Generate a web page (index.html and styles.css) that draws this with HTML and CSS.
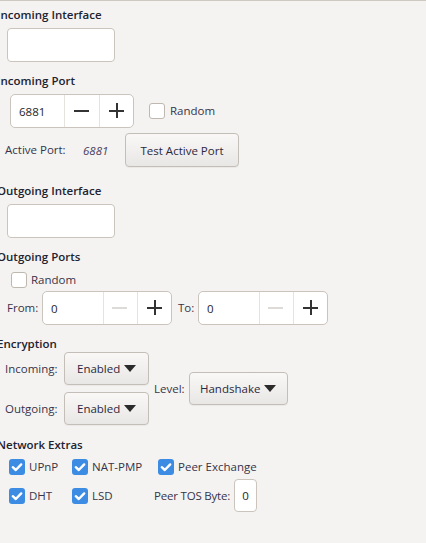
FILE: index.html
```html
<!DOCTYPE html>
<html lang="en">
<head>
<meta charset="utf-8">
<title>Connection</title>
<link rel="stylesheet" href="styles.css">
</head>
<body>
<div class="pane">

  <section class="group g-in-iface">
    <h2 class="title">Incoming Interface</h2>
    <div class="textbox iface"></div>
  </section>

  <section class="group g-in-port">
    <h2 class="title">Incoming Port</h2>
    <div class="row port-row">
      <div class="spinner sp-in">
        <span class="sp-value">6881</span>
        <span class="sp-btn"><i class="minus"></i></span>
        <span class="sp-btn"><i class="plus"></i></span>
      </div>
      <label class="check check-random"><span class="box"></span><span class="lbl">Random</span></label>
    </div>
    <div class="row active-row">
      <span class="lbl active-lbl">Active Port:</span>
      <span class="active-val">6881</span>
      <button class="btn test-btn">Test Active Port</button>
    </div>
  </section>

  <section class="group g-out-iface">
    <h2 class="title">Outgoing Interface</h2>
    <div class="textbox iface"></div>
  </section>

  <section class="group g-out-ports">
    <h2 class="title">Outgoing Ports</h2>
    <label class="check check-out-random"><span class="box"></span><span class="lbl">Random</span></label>
    <div class="row range-row">
      <span class="lbl from-lbl">From:</span>
      <div class="spinner sp-range">
        <span class="sp-value">0</span>
        <span class="sp-btn"><i class="minus off"></i></span>
        <span class="sp-btn"><i class="plus"></i></span>
      </div>
      <span class="lbl to-lbl">To:</span>
      <div class="spinner sp-range">
        <span class="sp-value">0</span>
        <span class="sp-btn"><i class="minus off"></i></span>
        <span class="sp-btn"><i class="plus"></i></span>
      </div>
    </div>
  </section>

  <section class="group g-enc">
    <h2 class="title">Encryption</h2>
    <div class="enc-grid">
      <span class="lbl enc-in-lbl">Incoming:</span>
      <div class="combo enc-in"><span>Enabled</span><i class="arrow"></i></div>
      <span class="lbl enc-out-lbl">Outgoing:</span>
      <div class="combo enc-out"><span>Enabled</span><i class="arrow"></i></div>
      <span class="lbl level-lbl">Level:</span>
      <div class="combo level"><span>Handshake</span><i class="arrow"></i></div>
    </div>
  </section>

  <section class="group g-extras">
    <h2 class="title">Network Extras</h2>
    <div class="extras-grid">
      <label class="check on"><span class="box"><svg viewBox="0 0 16 16"><path d="M3.8 8.2 L6.8 11 L12.2 5.4"/></svg></span><span class="lbl">UPnP</span></label>
      <label class="check on"><span class="box"><svg viewBox="0 0 16 16"><path d="M3.8 8.2 L6.8 11 L12.2 5.4"/></svg></span><span class="lbl">NAT-PMP</span></label>
      <label class="check on pex"><span class="box"><svg viewBox="0 0 16 16"><path d="M3.8 8.2 L6.8 11 L12.2 5.4"/></svg></span><span class="lbl">Peer Exchange</span></label>
      <label class="check on"><span class="box"><svg viewBox="0 0 16 16"><path d="M3.8 8.2 L6.8 11 L12.2 5.4"/></svg></span><span class="lbl">DHT</span></label>
      <label class="check on"><span class="box"><svg viewBox="0 0 16 16"><path d="M3.8 8.2 L6.8 11 L12.2 5.4"/></svg></span><span class="lbl">LSD</span></label>
      <div class="tos">
        <span class="lbl tos-lbl">Peer TOS Byte:</span>
        <span class="textbox tos-box">0</span>
      </div>
    </div>
  </section>

</div>
</body>
</html>
```

FILE: styles.css
```css
html, body {
  margin: 0;
  padding: 0;
  background: #f4f3f1;
}

body {
  font-family: "Open Sans", "Noto Sans", sans-serif;
  font-size: 11.5px;
  color: #37334a;
  overflow: hidden;
}

.pane {
  border-top: 1px solid #cec8c2;
  padding-top: 6px;
  height: 542px;
  box-sizing: border-box;
}

/* section headings sit slightly past the left edge */
.title {
  margin: 0 0 0 -3px;
  font-size: 11.5px;
  font-weight: 600;
  line-height: 16px;
  height: 16px;
  color: #222230;
  white-space: nowrap;
}

.g-in-port,
.g-out-ports,
.g-enc {
  margin-top: 11px;
}

.g-extras {
  margin-top: 12px;
}

.g-out-iface {
  margin-top: 16px;
}

.lbl {
  white-space: nowrap;
  line-height: 16px;
}

/* plain text fields */
.textbox {
  display: block;
  background: #fff;
  border: 1px solid #cbc4bd;
  border-radius: 4px;
  box-sizing: border-box;
}

.iface {
  margin: 5px 0 0 7px;
  width: 108px;
  height: 34px;
}

.row {
  display: flex;
  align-items: center;
}

/* number spinners */
.spinner {
  display: flex;
  height: 34px;
  background: #fff;
  border: 1px solid #cbc4bd;
  border-radius: 5px;
  box-sizing: border-box;
  overflow: hidden;
}

.sp-value {
  display: flex;
  align-items: center;
  padding-left: 8px;
  box-sizing: border-box;
  color: #1e1e28;
}

.sp-btn {
  width: 35px;
  border-left: 1px solid #e6e2de;
  box-sizing: border-box;
  position: relative;
}

.sp-btn:last-child {
  width: 34px;
}

.minus,
.plus {
  position: absolute;
  left: 50%;
  top: 50%;
  width: 15px;
  height: 15px;
  margin: -8px 0 0 -8px;
}

.minus::before,
.plus::before,
.plus::after {
  content: "";
  position: absolute;
  background: #333;
}

.minus::before,
.plus::before {
  left: 0;
  right: 0;
  top: 7px;
  height: 2px;
}

.plus::after {
  top: 0;
  bottom: 0;
  left: 7px;
  width: 2px;
}

.minus.off::before {
  background: #dddad7;
}

.port-row {
  margin: 5px 0 0 10px;
}

.sp-in {
  width: 124px;
}

.sp-in .sp-value {
  width: 53px;
}

.sp-range {
  width: 130px;
}

.sp-range .sp-value {
  width: 60px;
}

/* check boxes */
.check {
  display: flex;
  align-items: center;
  gap: 4px;
  height: 16px;
}

.box {
  width: 16px;
  height: 16px;
  box-sizing: border-box;
  border: 1px solid #bfb8b1;
  border-radius: 3px;
  background: #fff;
  flex: none;
}

.check.on .box {
  border: none;
  background: #3c8ce4;
}

.box svg {
  display: block;
  width: 16px;
  height: 16px;
}

.box path {
  fill: none;
  stroke: #fff;
  stroke-width: 2.4;
  stroke-linecap: round;
  stroke-linejoin: round;
}

.check-random {
  margin-left: 15px;
  gap: 5px;
}

.active-row {
  margin: 5px 0 0 5px;
}

.active-lbl {
  width: 78px;
}

.active-val {
  width: 42px;
  font-style: italic;
  color: #4b4060;
}

/* push buttons and combo boxes */
.btn,
.combo {
  font: inherit;
  color: #2c2840;
  background: linear-gradient(#f9f8f7, #e9e7e5);
  border: 1px solid #c4beb8;
  border-radius: 4px;
  box-sizing: border-box;
  box-shadow: 0 1px 0 rgba(0, 0, 0, 0.04);
}

.test-btn {
  width: 114px;
  height: 34px;
  padding: 0;
}

.check-out-random {
  margin: 7px 0 0 11px;
}

.range-row {
  margin: 3px 0 0 7px;
}

.from-lbl {
  width: 35px;
}

.to-lbl {
  margin-left: 6px;
  width: 20px;
}

.combo {
  display: flex;
  align-items: center;
  justify-content: space-between;
  padding: 0 12px;
  height: 33px;
}

.arrow {
  width: 0;
  height: 0;
  border-left: 6px solid transparent;
  border-right: 6px solid transparent;
  border-top: 7px solid #2b2b2b;
}

.enc-grid {
  display: grid;
  grid-template-columns: 59px 85px 40px 99px;
  grid-template-rows: 33px 33px;
  row-gap: 7px;
  column-gap: 0;
  align-items: center;
  margin: 0 0 0 5px;
}

.enc-in-lbl { grid-column: 1; grid-row: 1; }
.enc-in { grid-column: 2; grid-row: 1; }
.enc-out-lbl { grid-column: 1; grid-row: 2; }
.enc-out { grid-column: 2; grid-row: 2; }
.level-lbl { grid-column: 3; grid-row: 1 / 3; padding-left: 5px; }
.level { grid-column: 4; grid-row: 1 / 3; padding: 0 11px 0 10px; }

.extras-grid {
  display: grid;
  grid-template-columns: 63px 82px auto;
  grid-template-rows: 16px 33px;
  row-gap: 4px;
  align-items: center;
  justify-items: start;
  margin: 6px 0 0 9px;
}

.pex {
  margin-left: 4px;
}

.tos {
  display: flex;
  align-items: center;
  gap: 4px;
}

.tos-lbl {
  letter-spacing: -0.2px;
}

.tos-box {
  width: 23px;
  height: 33px;
  display: flex;
  align-items: center;
  justify-content: center;
  color: #1e1e28;
}
```
